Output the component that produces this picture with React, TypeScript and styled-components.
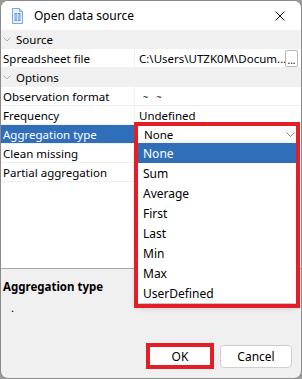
import React from "react";
import styled, { createGlobalStyle } from "styled-components";

const Global = createGlobalStyle`
  html, body { margin: 0; padding: 0; background: #9a9a9a; }
  body { font-family: "Noto Sans", "Open Sans", sans-serif; font-size: 11.5px; color: #000; }
  * { box-sizing: border-box; }
`;

const RED = "#e41e26";
const SEL = "#2f6fba";
const LINE = "#f0f0f0";

const Window = styled.div`
  position: relative;
  width: 302px;
  height: 379px;
  border: 1px solid #8a8a8a;
  border-radius: 8px;
  background: #f0f0f0;
  display: flex;
  flex-direction: column;
  overflow: hidden;
  & > * { flex-shrink: 0; }
`;

const TitleBar = styled.div`
  height: 29px;
  background: #fff;
  display: flex;
  align-items: center;
  padding: 0 0 0 11px;
  font-size: 12px;
`;

const Title = styled.div`
  margin-left: 11px;
  flex: 1;
`;

const CloseBtn = styled.div`
  width: 38px;
  height: 29px;
  display: flex;
  align-items: center;
  justify-content: center;
  margin-right: 2px;
`;

const Grid = styled.div`
  height: 238px;
  background: #fff;
  display: flex;
  flex-direction: column;
`;

const Category = styled.div`
  height: 19px;
  background: ${LINE};
  display: flex;
  align-items: center;
  padding-left: 2px;
  color: #000;
`;

const CatLabel = styled.span`
  margin-left: 5px;
`;

const Row = styled.div`
  height: 19px;
  display: grid;
  grid-template-columns: 133px 1px 1fr;
  border-bottom: 1px solid ${LINE};
`;

const Label = styled.div<{ $selected?: boolean }>`
  display: flex;
  align-items: center;
  padding-left: 2px;
  white-space: nowrap;
  overflow: hidden;
  background: ${(p) => (p.$selected ? SEL : "#fff")};
  color: ${(p) => (p.$selected ? "#fff" : "#000")};
`;

const Divider = styled.div`
  background: ${LINE};
`;

const Value = styled.div`
  display: flex;
  align-items: center;
  padding-left: 4px;
  white-space: nowrap;
  overflow: hidden;
  min-width: 0;
`;

const ValueText = styled.span`
  flex: 1;
  overflow: hidden;
  white-space: nowrap;
`;

const Tildes = styled.span`
  padding-left: 4px;
  letter-spacing: 3px;
  font-size: 9px;
`;

const EllipsisBtn = styled.div`
  width: 13px;
  height: 17px;
  margin-right: 3px;
  border: 1px solid #b8b8b8;
  border-radius: 2px;
  background: #fff;
  font-size: 10px;
  display: flex;
  align-items: flex-end;
  justify-content: center;
  line-height: 12px;
`;

const Combo = styled.div`
  flex: 1;
  height: 100%;
  display: flex;
  align-items: center;
  justify-content: space-between;
  padding: 0 6px 0 5px;
  background: #fff;
`;

const Description = styled.div`
  border-top: 1px solid #a5a5a5;
  padding: 10px 0 0 2px;
  height: 76px;
`;

const DescTitle = styled.div`
  font-weight: bold;
  line-height: 16px;
`;

const DescText = styled.div`
  margin-top: 5px;
  padding-left: 8px;
  line-height: 16px;
`;

const Buttons = styled.div`
  display: flex;
  justify-content: flex-end;
  align-items: center;
  gap: 6px;
  padding-right: 9px;
  height: 24px;
`;

const Button = styled.div<{ $w: number; $h: number }>`
  width: ${(p) => p.$w}px;
  height: ${(p) => p.$h}px;
  background: #fff;
  border: 1px solid #cfcfcf;
  border-radius: 4px;
  display: flex;
  align-items: center;
  justify-content: center;
  font-size: 12px;
`;

const Marked = styled.div`
  border: 4px solid ${RED};
  width: 68px;
  height: 26px;
  background: #fff;
  display: flex;
  align-items: center;
  justify-content: center;
  font-size: 12px;
`;

const DropList = styled.div`
  position: absolute;
  left: 137px;
  top: 142px;
  width: 159px;
  background: #fff;
  box-shadow: 0 3px 8px rgba(0, 0, 0, 0.25);
  display: flex;
  flex-direction: column;
`;

const Item = styled.div<{ $selected?: boolean }>`
  height: 20px;
  display: flex;
  align-items: center;
  padding-left: 5px;
  font-size: 12px;
  background: ${(p) => (p.$selected ? SEL : "#fff")};
  color: ${(p) => (p.$selected ? "#fff" : "#000")};
`;

const Annotation = styled.div`
  position: absolute;
  left: 133px;
  top: 121px;
  width: 166px;
  height: 186px;
  border: 4px solid ${RED};
  pointer-events: none;
`;

const DocIcon = () => (
  <svg width="11" height="16" viewBox="0 0 11 16">
    <path d="M0.5 0.5 H7.5 L10.5 3.5 V15.5 H0.5 Z" fill="#e6f1fb" stroke="#7fa9d8" />
    <path d="M7.5 0.5 V3.5 H10.5" fill="#cfe2f5" stroke="#7fa9d8" />
    <rect x="2.5" y="5" width="6" height="8" fill="#5b9bd9" />
    <path d="M2.5 7 H8.5 M2.5 9 H8.5 M2.5 11 H8.5 M5.5 5 V13" stroke="#e6f1fb" strokeWidth="0.8" />
  </svg>
);

const CloseIcon = () => (
  <svg width="10" height="10" viewBox="0 0 10 10">
    <path d="M0.5 0.5 L9.5 9.5 M9.5 0.5 L0.5 9.5" stroke="#1a1a1a" strokeWidth="1" />
  </svg>
);

const CatChevron = () => (
  <svg width="8" height="5" viewBox="0 0 8 5">
    <path d="M0.5 0.5 L4 4 L7.5 0.5" fill="none" stroke="#b0b0b0" strokeWidth="1" />
  </svg>
);

const ComboChevron = () => (
  <svg width="9" height="5" viewBox="0 0 9 5">
    <path d="M0.5 0.5 L4.5 4.5 L8.5 0.5" fill="none" stroke="#8a8a8a" strokeWidth="1" />
  </svg>
);

const items = ["None", "Sum", "Average", "First", "Last", "Min", "Max", "UserDefined"];

export default function App() {
  return (
    <>
      <Global />
      <Window>
        <TitleBar>
          <DocIcon />
          <Title>Open data source</Title>
          <CloseBtn>
            <CloseIcon />
          </CloseBtn>
        </TitleBar>
        <Grid>
          <Category>
            <CatChevron />
            <CatLabel>Source</CatLabel>
          </Category>
          <Row>
            <Label>Spreadsheet file</Label>
            <Divider />
            <Value>
              <ValueText>C:\Users\UTZK0M\Docum...</ValueText>
              <EllipsisBtn>...</EllipsisBtn>
            </Value>
          </Row>
          <Category>
            <CatChevron />
            <CatLabel>Options</CatLabel>
          </Category>
          <Row>
            <Label>Observation format</Label>
            <Divider />
            <Value>
              <Tildes>~ ~</Tildes>
            </Value>
          </Row>
          <Row>
            <Label>Frequency</Label>
            <Divider />
            <Value>Undefined</Value>
          </Row>
          <Row>
            <Label $selected>Aggregation type</Label>
            <Divider />
            <Value>
              <Combo>
                <span>None</span>
                <ComboChevron />
              </Combo>
            </Value>
          </Row>
          <Row>
            <Label>Clean missing</Label>
            <Divider />
            <Value />
          </Row>
          <Row>
            <Label>Partial aggregation</Label>
            <Divider />
            <Value />
          </Row>
        </Grid>
        <Description>
          <DescTitle>Aggregation type</DescTitle>
          <DescText>.</DescText>
        </Description>
        <Buttons>
          <Marked>OK</Marked>
          <Button $w={72} $h={23}>Cancel</Button>
        </Buttons>
        <DropList>
          {items.map((it, i) => (
            <Item key={it} $selected={i === 0}>
              {it}
            </Item>
          ))}
        </DropList>
        <Annotation />
      </Window>
    </>
  );
}
